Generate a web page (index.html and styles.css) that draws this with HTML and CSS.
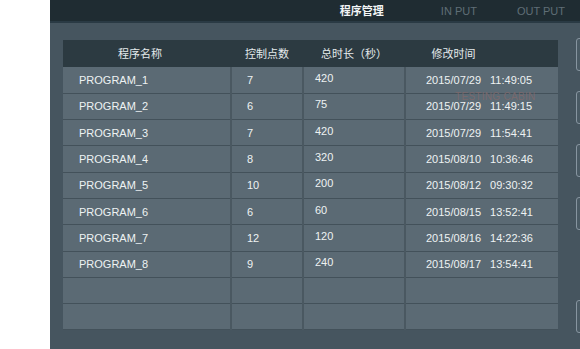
FILE: index.html
```html
<!DOCTYPE html>
<html>
<head>
    <meta charset="utf-8">
    <title>程序管理</title>
    <link rel="stylesheet" href="styles.css">
</head>
<body>
  <div class="screen">
    <div class="topbar">
        <span class="tab active">程序管理</span>
        <span class="tab">IN PUT</span>
        <span class="tab">OUT PUT</span>
    </div>

    <div class="panel">
        <div class="table-wrap">
            <table class="programs">
                <thead>
                    <tr>
                        <th class="c-name">程序名称</th>
                        <th class="c-points">控制点数</th>
                        <th class="c-time">总时长（秒）</th>
                        <th class="c-date">修改时间</th>
                    </tr>
                </thead>
                <tbody id="rows"></tbody>
            </table>
            <span class="watermark">TESTING CABIN</span>
        </div>

        <div class="side">
            <div class="side-btn"></div>
            <div class="side-btn"></div>
            <div class="side-btn"></div>
            <div class="side-btn"></div>
            <div class="side-btn low"></div>
        </div>
    </div>
  </div>

  <script>
    // program list shown in the table
    const programs = [
        ["PROGRAM_1", "7", "420", "2015/07/29", "11:49:05"],
        ["PROGRAM_2", "6", "75", "2015/07/29", "11:49:15"],
        ["PROGRAM_3", "7", "420", "2015/07/29", "11:54:41"],
        ["PROGRAM_4", "8", "320", "2015/08/10", "10:36:46"],
        ["PROGRAM_5", "10", "200", "2015/08/12", "09:30:32"],
        ["PROGRAM_6", "6", "60", "2015/08/15", "13:52:41"],
        ["PROGRAM_7", "12", "120", "2015/08/16", "14:22:36"],
        ["PROGRAM_8", "9", "240", "2015/08/17", "13:54:41"]
    ];

    const tbody = document.getElementById("rows");

    for (let i = 0; i < 10; i++) {
        const p = programs[i];
        const tr = document.createElement("tr");
        if (p) {
            tr.innerHTML =
                "<td class='c-name'>" + p[0] + "</td>" +
                "<td class='c-points'>" + p[1] + "</td>" +
                "<td class='c-time'><span class='raise'>" + p[2] + "</span></td>" +
                "<td class='c-date'>" + p[3] + "<span class='clock'>" + p[4] + "</span></td>";
        } else {
            tr.innerHTML = "<td></td><td></td><td></td><td></td>";
        }
        tbody.appendChild(tr);
    }
  </script>
</body>
</html>
```

FILE: styles.css
```css
body {
    margin: 0;
    background-color: #fff;
    font-family: "Liberation Sans", "Noto Sans CJK SC", sans-serif;
    overflow: hidden;
}
.screen {
    margin-left: 50px;
    width: 530px;
    height: 349px;
    background-color: #46555f;
    display: flex;
    flex-direction: column;
    overflow: hidden;
}
.topbar {
    height: 21px;
    background-color: #1f2c32;
    border-bottom: 2px solid #2a3a44;
    display: flex;
    align-items: center;
    justify-content: flex-end;
    font-size: 11px;
    line-height: 14px;
}
.tab {
    color: #5f6e76;
    margin-right: 40px;
}
.tab.active {
    color: #f2f5f6;
    font-weight: bold;
    margin-right: 57px;
}
.tab:last-child {
    margin-right: 15px;
}
.panel {
    display: flex;
    padding: 17px 0 0 13px;
}
.table-wrap {
    position: relative;
    width: 495px;
    flex: none;
}
.programs {
    width: 495px;
    border-collapse: collapse;
    table-layout: fixed;
    font-size: 11px;
    line-height: 14px;
    color: #eef2f3;
}
.programs th,
.programs td {
    box-sizing: border-box;
    padding: 0;
}
.programs th {
    height: 27px;
    background-color: #2c3a41;
    font-weight: normal;
    text-align: center;
    color: #e4eaec;
}
.programs td {
    height: 26.3px;
    background-color: #5b6a74;
    border-bottom: 1px solid #43515a;
    border-right: 2px solid #4a5861;
    text-align: left;
}
.programs td:last-child {
    border-right: none;
}
th.c-name { width: 168px; padding-right: 14px; }
th.c-points { width: 72px; }
th.c-time { width: 102px; }
th.c-date { padding-right: 56px; }
td.c-name { padding-left: 16px; }
td.c-points { padding-left: 15px; }
td.c-time { padding-left: 11px; }
td.c-date { padding-left: 20px; }
.raise {
    position: relative;
    top: -2px;
}
.clock {
    margin-left: 9px;
}
.watermark {
    position: absolute;
    left: 392px;
    top: 51px;
    font-size: 10px;
    color: rgba(125, 105, 108, 0.9);
    letter-spacing: 0.3px;
}
.side {
    margin-left: 18px;
    display: flex;
    flex-direction: column;
    gap: 20px;
    margin-top: -2px;
}
.side-btn {
    width: 40px;
    height: 31px;
    border: 1px solid #8795a0;
    border-radius: 3px;
    background-color: #4a5a64;
}
.side-btn.low {
    margin-top: 50px;
}
```
